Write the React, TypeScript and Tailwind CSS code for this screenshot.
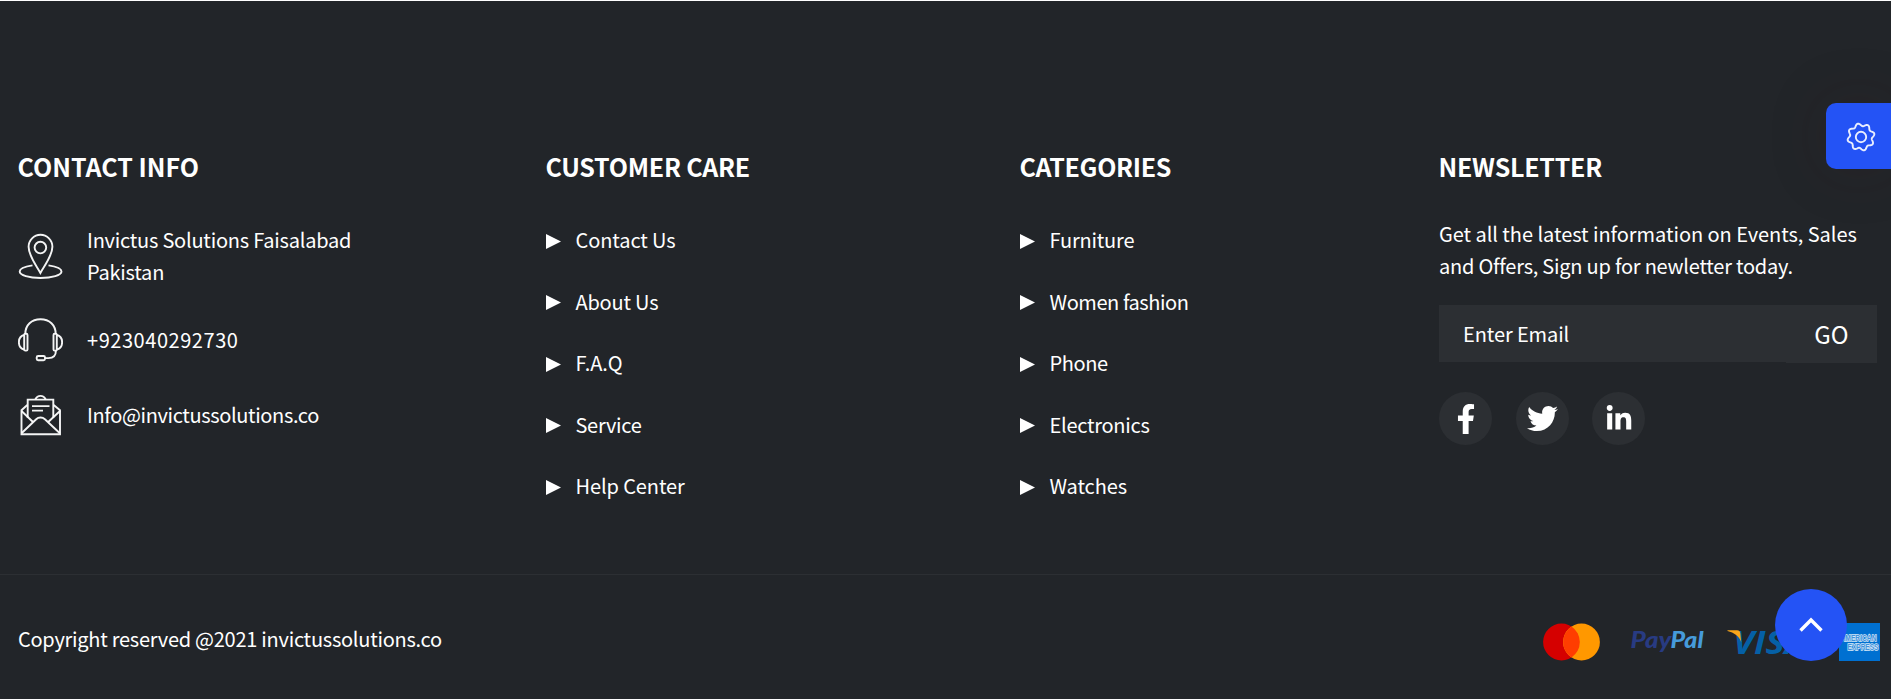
import type { ReactNode } from "react";
import { FaFacebookF, FaTwitter, FaLinkedinIn } from "react-icons/fa";

type LinkItem = { label: string; track: string };

const customerCare: LinkItem[] = [
  { label: "Contact Us", track: "tracking-[-0.1px]" },
  { label: "About Us", track: "tracking-[-0.2px]" },
  { label: "F.A.Q", track: "tracking-[-0.1px]" },
  { label: "Service", track: "tracking-[-0.3px]" },
  { label: "Help Center", track: "tracking-[-0.1px]" },
];

const categories: LinkItem[] = [
  { label: "Furniture", track: "tracking-[-0.2px]" },
  { label: "Women fashion", track: "tracking-[-0.43px]" },
  { label: "Phone", track: "tracking-[-0.4px]" },
  { label: "Electronics", track: "tracking-[-0.27px]" },
  { label: "Watches", track: "tracking-[-0.1px]" },
];

function Heading({ children, track }: { children: ReactNode; track: string }) {
  return <h4 className={`-ml-[0.5px] text-[25px] font-bold leading-[30px] ${track}`}>{children}</h4>;
}

function LinkList({ items }: { items: LinkItem[] }) {
  return (
    <ul className="mt-[43px] flex flex-col gap-[29.5px]">
      {items.map((item) => (
        <li key={item.label} className="flex h-8 items-center gap-[14.5px]">
          <svg width="15" height="15" viewBox="0 0 15 15" className="mt-[2px] shrink-0">
            <path d="M0 0L15 7.5L0 15Z" fill="#fff" />
          </svg>
          <a href="#" className={`whitespace-nowrap leading-8 ${item.track}`}>
            {item.label}
          </a>
        </li>
      ))}
    </ul>
  );
}

const line = { fill: "none", stroke: "#fff", strokeWidth: 1.9, strokeOpacity: 0.95 };

function PinIcon() {
  return (
    <svg width="45" height="46" viewBox="18 232 45 46" {...line}>
      <path d="M40.4 272C37 265.5 28.6 255 28.6 245.8A11.9 12 0 0 1 52.4 245.8C52.4 255 43.8 265.5 40.4 272Z" />
      <circle cx="40.4" cy="246.6" r="5.8" />
      <path d="M32.5 264.4C24.5 265.5 19.7 267.7 19.7 270.6C19.7 274.3 29 277 40.5 277C52 277 61.5 274.3 61.5 270.6C61.5 267.7 56.5 265.5 48.5 264.4" />
    </svg>
  );
}

function HeadsetIcon() {
  return (
    <svg width="45" height="45" viewBox="18 316.5 45 45" {...line}>
      <path d="M25.3 333.5C25.3 324.5 31.5 318.7 40.5 318.7C49.5 318.7 55.7 324.5 55.7 333.5" />
      <rect x="24.2" y="333.3" width="3.3" height="16.8" rx="1.2" />
      <rect x="53.5" y="333.3" width="3.3" height="16.8" rx="1.2" />
      <path d="M24 334.5C20.5 335.5 18.9 338.5 18.9 341.8C18.9 345.2 20.5 348 24 349" />
      <path d="M57 334.5C60.5 335.5 62.1 338.5 62.1 341.8C62.1 345.2 60.5 348 57 349" />
      <path d="M55.9 350.3C55.9 355 53 357.6 48.5 357.6L45.2 357.6" />
      <rect x="36.7" y="355.5" width="8.3" height="4.2" rx="1.5" />
    </svg>
  );
}

function MailIcon() {
  return (
    <svg width="45" height="42" viewBox="18 393.5 45 42" {...line}>
      <path d="M27.7 417.3V399.1H53.3V417.3" />
      <path d="M35.3 399C36.5 396.5 38.2 395.4 40.5 395.4C42.8 395.4 44.5 396.5 45.7 399" />
      <path d="M32 405.6H49.5M32 410.1H43" />
      <path d="M27.3 404.5L21.5 409.7V433.7H60V409.7L53.7 404.5" />
      <path d="M21.5 410.5L33 421.5M60 410.5L48.2 421.5" />
      <path d="M21.8 432.5L36.2 418.7C38.5 416.5 42.5 416.5 44.9 418.7L59.6 432.5" />
    </svg>
  );
}

const gearPoints = Array.from({ length: 160 }, (_, i) => {
  const a = (i / 160) * Math.PI * 2;
  const r = 12.3 + 1.4 * Math.cos(8 * (a - (31 * Math.PI) / 180));
  return `${(16 + r * Math.cos(a)).toFixed(2)},${(16 + r * Math.sin(a)).toFixed(2)}`;
}).join(" ");

function GearIcon() {
  return (
    <svg width="32" height="32" viewBox="0 0 32 32" fill="none" stroke="#fff" strokeOpacity="0.9" strokeWidth="1.9">
      <polygon points={gearPoints} strokeLinejoin="round" />
      <circle cx="16" cy="16" r="5.2" />
    </svg>
  );
}

function Mastercard() {
  return (
    <svg width="58" height="38" viewBox="0 0 58 38">
      <circle cx="19.5" cy="19" r="18.4" fill="#d50000" />
      <circle cx="39.5" cy="19" r="18.4" fill="#ff9800" />
      <path d="M29.5 3.6A18.4 18.4 0 0 1 29.5 34.4A18.4 18.4 0 0 1 29.5 3.6Z" fill="#ff3d00" />
    </svg>
  );
}

function PayPal() {
  return (
    <svg width="76" height="38" viewBox="0 0 76 38" className="overflow-visible font-['Lato',sans-serif] text-[22.5px] font-black italic tracking-normal">
      <text x="-0.5" y="25.3" textLength="41" lengthAdjust="spacingAndGlyphs" fill="#283b82">Pay</text>
      <text x="39.5" y="25.3" textLength="33" lengthAdjust="spacingAndGlyphs" fill="#469bdb">Pal</text>
    </svg>
  );
}

function Visa() {
  return (
    <svg width="84" height="50" viewBox="0 -10 84 50" className="overflow-visible font-['Open_Sans',sans-serif] text-[33px] font-bold italic tracking-normal">
      <text x="6" y="27.2" textLength="74" lengthAdjust="spacingAndGlyphs" fill="#0560a6">VISA</text>
      <path d="M0.5 3.2H10C12.3 3.2 13 4.3 13.3 6.2L14.2 15.2C12.5 9.2 7 5.7 0.5 4Z" fill="#faa61a" />
    </svg>
  );
}

function Amex() {
  return (
    <svg width="41" height="38" viewBox="0 0 41 38" className="overflow-visible font-['Liberation_Sans',sans-serif] text-[9px] font-bold tracking-normal">
      <rect width="41" height="38" fill="#0070d1" />
      <g fill="#3f92dc" stroke="#d6e8f8" strokeWidth="1.4" paintOrder="stroke">
        <text x="1.5" y="18.2" textLength="36" lengthAdjust="spacingAndGlyphs">AMERICAN</text>
        <text x="8.5" y="27" textLength="31" lengthAdjust="spacingAndGlyphs">EXPRESS</text>
      </g>
    </svg>
  );
}

export default function App() {
  return (
    <div className="relative h-[699px] w-full overflow-hidden border-t border-white bg-[#222529] font-['Noto_Sans_CJK_SC',sans-serif] text-[20px] text-white">
      <footer className="flex h-full flex-col">
        <div className="flex h-[573px] pl-[18px] pt-[150px]">
          <section className="w-[528px]">
            <Heading track="tracking-[0px]">CONTACT INFO</Heading>
            <div className="mt-[43px] flex items-center gap-6">
              <PinIcon />
              <p className="w-[280px] leading-8 tracking-[-0.23px]">Invictus Solutions Faisalabad Pakistan</p>
            </div>
            <div className="mt-[28.5px] flex items-center gap-6">
              <HeadsetIcon />
              <p className="pt-px leading-8 tracking-[0.55px]">+923040292730</p>
            </div>
            <div className="mt-[32.5px] flex items-center gap-6">
              <MailIcon />
              <p className="leading-8 tracking-[-0.37px]">Info@invictussolutions.co</p>
            </div>
          </section>
          <section className="w-[474px]">
            <Heading track="tracking-[-0.25px]">CUSTOMER CARE</Heading>
            <LinkList items={customerCare} />
          </section>
          <section className="w-[419px]">
            <Heading track="tracking-[-0.35px]">CATEGORIES</Heading>
            <LinkList items={categories} />
          </section>
          <section className="w-[438px]">
            <Heading track="tracking-[-0.25px]">NEWSLETTER</Heading>
            <p className="mt-[37px] whitespace-nowrap leading-8">
              <span className="tracking-[-0.05px]">Get all the latest information on Events, Sales</span>
              <br />
              <span className="tracking-[-0.23px]">and Offers, Sign up for newletter today.</span>
            </p>
            <form className="mt-[23px] flex items-start">
              <input
                type="text"
                placeholder="Enter Email"
                className="h-[57px] w-[347px] bg-[#2c2f33] px-6 tracking-[-0.1px] outline-none placeholder:text-white placeholder:opacity-100"
              />
              <button type="button" className="h-[58px] w-[91px] bg-[#2c2f33] text-[24px] leading-[30px]">
                GO
              </button>
            </form>
            <div className="mt-[29px] flex gap-[23.5px]">
              <a href="#" className="flex size-[53px] items-center justify-center rounded-full bg-[#2c2f33]">
                <FaFacebookF size={30} />
              </a>
              <a href="#" className="flex size-[53px] items-center justify-center rounded-full bg-[#2c2f33]">
                <FaTwitter size={31} />
              </a>
              <a href="#" className="flex size-[53px] items-center justify-center rounded-full bg-[#2c2f33]">
                <FaLinkedinIn size={28} />
              </a>
            </div>
          </section>
        </div>
        <div className="flex flex-1 items-start justify-between border-t border-[#2c2f33] pl-[18px] pr-[11px]">
          <p className="mt-[48px] leading-8 tracking-[-0.26px]">Copyright reserved @2021 invictussolutions.co</p>
          <div className="mt-[42px] flex items-center">
            <Mastercard />
            <div className="ml-[31px] flex"><PayPal /></div>
            <div className="ml-[20px] flex"><Visa /></div>
            <div className="ml-[28px] flex"><Amex /></div>
          </div>
        </div>
      </footer>
      <button
        type="button"
        aria-label="Settings"
        className="absolute right-0 top-[102px] flex h-[66px] w-[65px] items-center justify-center rounded-l-[10px] bg-[#2453f5] pl-[5px] pt-px shadow-[0_0_60px_rgba(60,30,30,0.18)]"
      >
        <GearIcon />
      </button>
      <button
        type="button"
        aria-label="Back to top"
        className="absolute left-[1775px] top-[588px] flex size-[72px] items-center justify-center rounded-full bg-[#2453f5]"
      >
        <svg width="24" height="16" viewBox="0 0 24 16" fill="none" stroke="#fff" strokeWidth="3.4">
          <path d="M1.5 13.5L12 3L22.5 13.5" />
        </svg>
      </button>
    </div>
  );
}
